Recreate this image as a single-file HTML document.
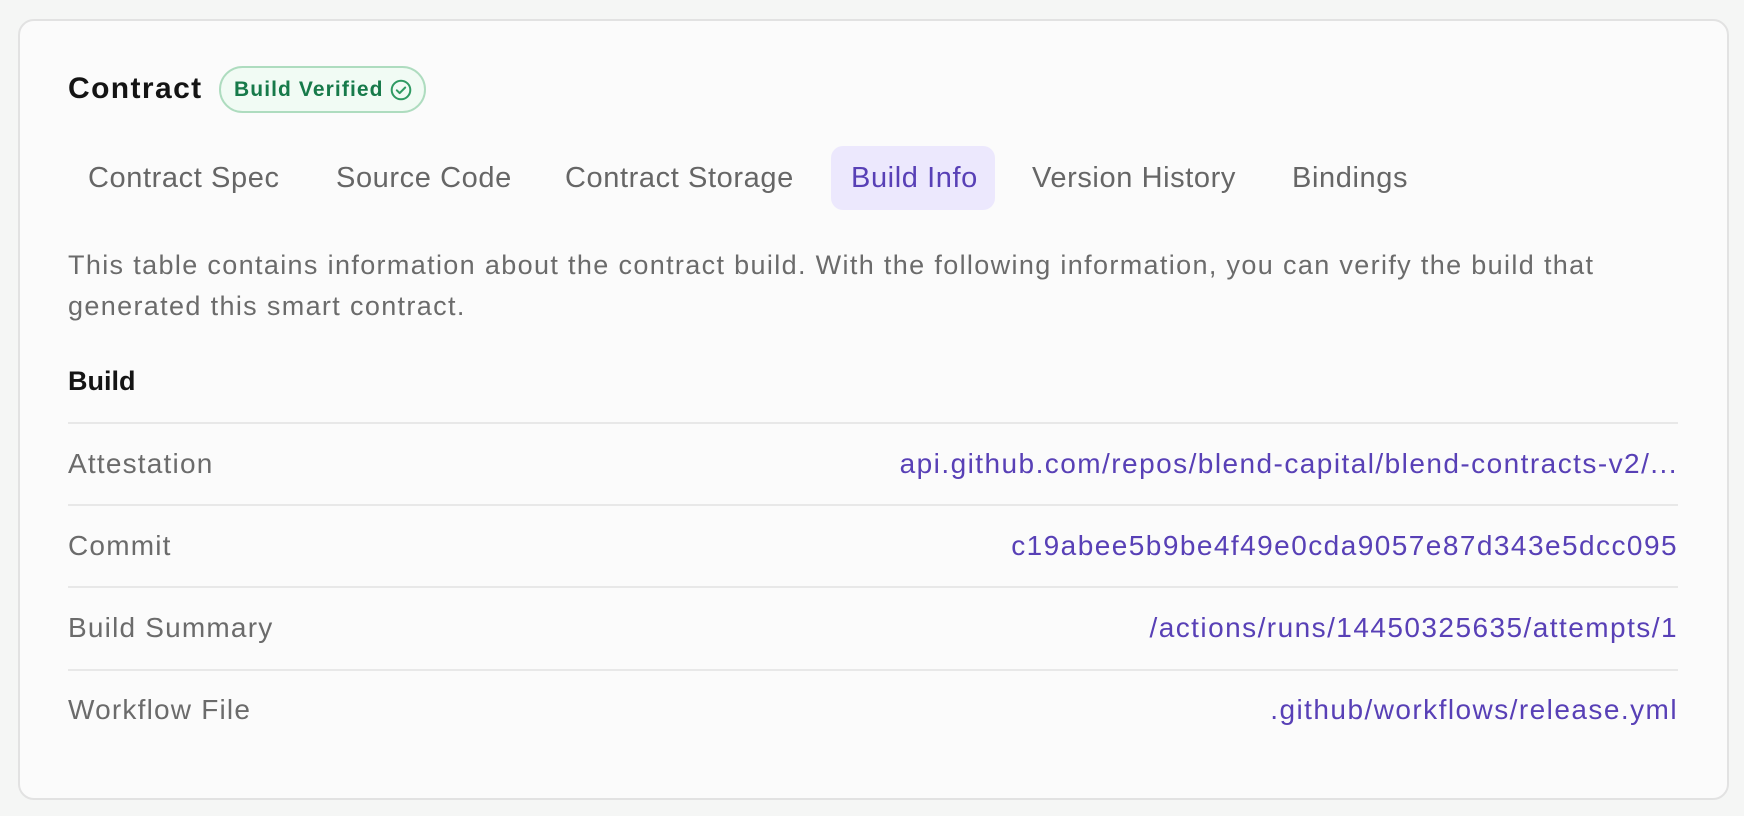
<!DOCTYPE html>
<html><head><meta charset="utf-8"><style>
*{margin:0;padding:0;box-sizing:border-box}
body{width:1744px;height:816px;background:#f5f6f5;font-family:"Liberation Sans",Arial,sans-serif;position:relative;overflow:hidden}
.card{position:absolute;left:18px;top:19px;width:1711px;height:781px;background:#fbfbfb;border:2px solid #e2e2e2;border-radius:16px}
.a{position:absolute;white-space:nowrap}
.title{left:68px;top:71px;font-size:30px;font-weight:700;color:#141414;line-height:36px;letter-spacing:1.4px}
.badge{left:219px;top:66px;width:207px;height:47px;border:2px solid #aedcbf;background:#f1fbf4;border-radius:24px}
.badge span{position:absolute;left:13px;top:10px;font-size:21px;font-weight:700;color:#177a4a;line-height:24px;letter-spacing:1.1px}
.tab{top:160px;font-size:29px;color:#666;line-height:36px;letter-spacing:0.6px}
.pill{left:831px;top:146px;width:164px;height:64px;background:#ece8fd;border-radius:12px}
.desc{left:68px;top:245px;font-size:27px;color:#6b6b6b;line-height:41px;width:1600px;white-space:normal;letter-spacing:1.35px}
.h{left:68px;top:366px;font-size:27px;font-weight:700;color:#141414}
.line{position:absolute;left:68px;width:1610px;height:2px;background:#e8e8e8}
.lbl{left:68px;font-size:28px;color:#6b6b6b;line-height:32px;letter-spacing:1.2px}
.val{right:66px;font-size:28px;color:#5840b6;line-height:32px;letter-spacing:1.45px}
</style></head><body>
<div class="card"></div>
<div class="a title">Contract</div>
<div class="a badge"><span>Build Verified</span>
<svg style="position:absolute;left:169px;top:11px" width="22" height="22" viewBox="0 0 22 22"><circle cx="11" cy="11" r="9.3" fill="none" stroke="#2f9a62" stroke-width="2"/><path d="M6.8 11.3l2.9 2.8 5.5-5.6" fill="none" stroke="#2f9a62" stroke-width="2" stroke-linecap="round" stroke-linejoin="round"/></svg></div>
<div class="a pill"></div>
<div class="a tab" style="left:88px">Contract Spec</div>
<div class="a tab" style="left:336px">Source Code</div>
<div class="a tab" style="left:565px">Contract Storage</div>
<div class="a tab" style="left:851px;color:#5840b6">Build Info</div>
<div class="a tab" style="left:1032px">Version History</div>
<div class="a tab" style="left:1292px">Bindings</div>
<div class="a desc">This table contains information about the contract build. With the following information, you can verify the build that<br>generated this smart contract.</div>
<div class="a h">Build</div>
<div class="line" style="top:422px"></div>
<div class="line" style="top:504px"></div>
<div class="line" style="top:586px"></div>
<div class="line" style="top:669px"></div>
<div class="a lbl" style="top:448px">Attestation</div>
<div class="a val" style="top:448px">api.github.com/repos/blend-capital/blend-contracts-v2/...</div>
<div class="a lbl" style="top:530px">Commit</div>
<div class="a val" style="top:530px">c19abee5b9be4f49e0cda9057e87d343e5dcc095</div>
<div class="a lbl" style="top:612px">Build Summary</div>
<div class="a val" style="top:612px">/actions/runs/14450325635/attempts/1</div>
<div class="a lbl" style="top:694px">Workflow File</div>
<div class="a val" style="top:694px">.github/workflows/release.yml</div>
</body></html>
